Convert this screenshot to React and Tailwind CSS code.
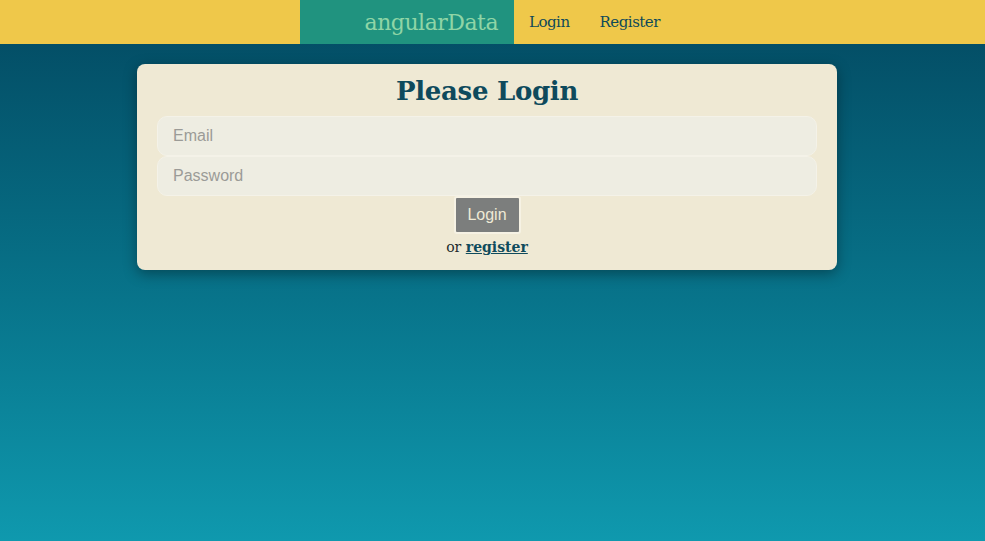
import React from 'react';

const serif = "font-['DejaVu_Serif','Liberation_Serif',serif]";
const sans = "font-['Liberation_Sans',Arial,sans-serif]";

const App = () => {
  return (
    <div className="min-h-[541px] h-[541px] flex flex-col bg-gradient-to-b from-[#034961] to-[#0f99ae] overflow-hidden">
      {/* Nav */}
      <nav className={`h-[44px] bg-[#efc84a] flex ${serif}`}>
        <div className="ml-[300px] w-[214px] bg-[#20937f] flex items-center justify-end pr-[16px]">
          <span className="text-[22px] text-[#8fd5a6] tracking-[-0.5px]">angularData</span>
        </div>
        <a href="#" className="ml-[15px] flex items-center text-[15px] text-[#0f4a59] tracking-[-0.5px]">Login</a>
        <a href="#" className="ml-[30px] flex items-center text-[15px] text-[#0f4a59] tracking-[-0.5px]">Register</a>
      </nav>

      {/* Card */}
      <div className="mt-[20px] mx-[137px] w-[700px] bg-[#efe9d4] rounded-[8px] shadow-[0_4px_14px_rgba(0,0,0,0.35)] px-[20px] pt-[6px] pb-[12px] flex flex-col items-center">
        <h1 className={`${serif} text-[26px] leading-[42px] text-[#0e4a5c] font-bold tracking-[-0.3px]`}>Please Login</h1>
        <div className="w-full flex flex-col mt-[4px]">
          <input
            type="text"
            placeholder="Email"
            className={`${sans} w-full h-[40px] rounded-[10px] bg-[#eeede2] border border-[#f4f2e8] px-[15px] text-[16px] text-[#333] placeholder:text-[#9b9b97] outline-none`}
          />
          <input
            type="password"
            placeholder="Password"
            className={`${sans} w-full h-[40px] rounded-[10px] bg-[#eeede2] border border-[#f4f2e8] px-[15px] text-[16px] text-[#333] placeholder:text-[#9b9b97] outline-none`}
          />
        </div>
        <button className={`${sans} w-[67px] h-[38px] bg-[#7c7e7d] border-2 border-[#f6f2e4] rounded-[3px] text-[16px] text-[#efead6]`}>
          Login
        </button>
        <p className={`${serif} mt-[2px] text-[14px] leading-[22px] text-[#1c2a2c]`}>
          or <a href="#" className="underline font-bold text-[#0f4b5c]">register</a>
        </p>
      </div>
    </div>
  );
};

export default App;
